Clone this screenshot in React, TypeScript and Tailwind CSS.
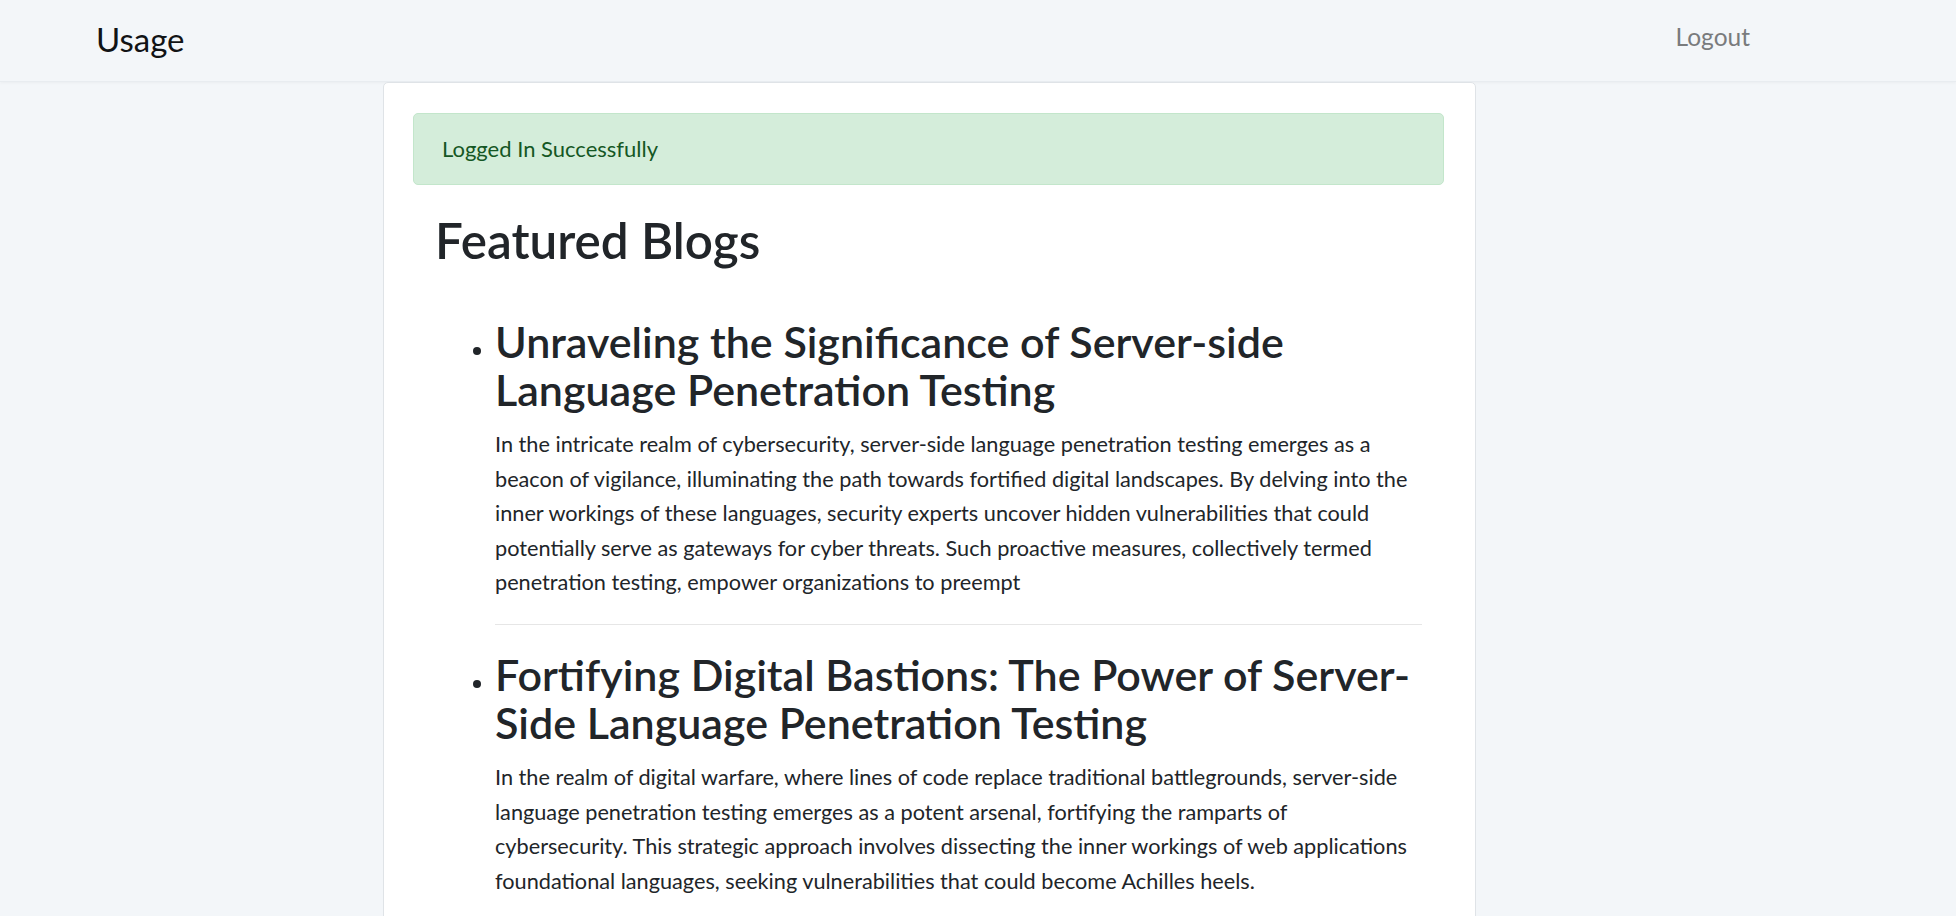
const blogs = [
  {
    title: "Unraveling the Significance of Server-side Language Penetration Testing",
    body: "In the intricate realm of cybersecurity, server-side language penetration testing emerges as a beacon of vigilance, illuminating the path towards fortified digital landscapes. By delving into the inner workings of these languages, security experts uncover hidden vulnerabilities that could potentially serve as gateways for cyber threats. Such proactive measures, collectively termed penetration testing, empower organizations to preempt",
  },
  {
    title: "Fortifying Digital Bastions: The Power of Server-Side Language Penetration Testing",
    body: "In the realm of digital warfare, where lines of code replace traditional battlegrounds, server-side language penetration testing emerges as a potent arsenal, fortifying the ramparts of cybersecurity. This strategic approach involves dissecting the inner workings of web applications foundational languages, seeking vulnerabilities that could become Achilles heels.",
  },
]

export default function App() {
  return (
    <div className="min-h-screen bg-[#f3f6f9] font-['Lato','Noto_Sans',sans-serif] text-[#212529]">
      <nav className="flex h-[82px] items-start justify-between border-b border-[#e8ecf0] pl-[96px] pr-[206px] shadow-[0_1px_3px_rgba(0,0,0,0.04)]">
        <a className="mt-[20px] text-[33px] leading-[38px] text-[#111315]">Usage</a>
        <a className="mt-[22px] text-[24.5px] leading-[30px] text-[#797b7d]">Logout</a>
      </nav>

      <main className="ml-[383px] w-[1093px] rounded-t-[5px] border border-[#dfe3e7] bg-white pt-[30px] pl-[29px] pr-[31px] pb-10">
        <div className="rounded-[5px] border border-[#c3e6cb] bg-[#d4edda] pt-[18px] pb-[18px] pl-[28px] text-[22px] leading-[34px] text-[#155724]">
          Logged In Successfully
        </div>

        <section className="mt-[25px] px-[22px]">
          <h1 className="text-[49.4px] font-semibold leading-[60px]">Featured Blogs</h1>

          <ul className="mt-[48px] list-disc pl-[60px] text-[23px]">
            {blogs.map((blog, i) => (
              <li key={i}>
                <h3 className="mb-[13px] text-[43px] font-semibold leading-[48px]">{blog.title}</h3>
                <p className="text-[21.7px] leading-[34.6px]">{blog.body}</p>
                {i === 0 && <hr className="mt-[24px] mb-[26px] border-t border-[#e6e6e6]" />}
              </li>
            ))}
          </ul>
        </section>
      </main>
    </div>
  )
}
